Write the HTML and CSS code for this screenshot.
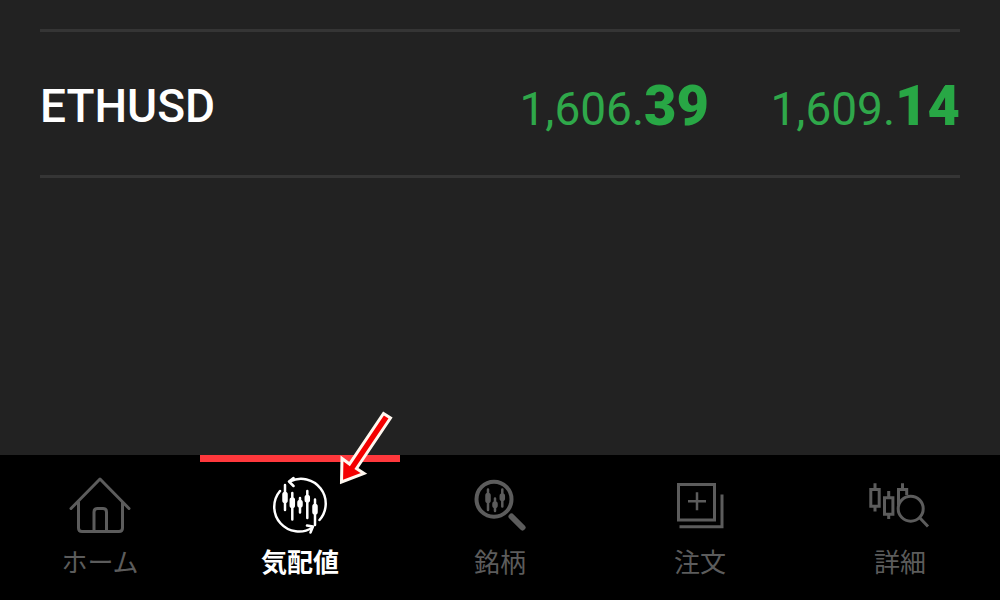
FILE: index.html
```html
<!DOCTYPE html>
<html lang="ja">
<head>
    <meta charset="UTF-8">
    <meta name="viewport" content="width=device-width, initial-scale=1.0">
    <title>気配値</title>
    <link rel="stylesheet" href="styles.css">
</head>
<body>
    <main class="quotes">
        <table class="quote-table">
            <tbody>
                <tr>
                    <th class="symbol" scope="row">ETHUSD</th>
                    <td class="price">1,606.<b>39</b></td>
                    <td class="price ask">1,609.<b>14</b></td>
                </tr>
            </tbody>
        </table>
    </main>

    <nav class="tab-bar">
        <a class="tab" href="#home">
            <svg class="icon" viewBox="0 0 64 64" aria-hidden="true">
                <path d="M3 34.500 32 5l29 29.500M10.500 28v26q0 3.500 3.500 3.500h37q3.500 0 3.500-3.500V28M26 57V38q0-3.500 3.500-3.500h5.500q3.500 0 3.500 3.500v19"/>
            </svg>
            <span>ホーム</span>
        </a>
        <a class="tab active" href="#quotes" aria-current="page">
            <svg class="icon" viewBox="0 0 64 64" aria-hidden="true">
                <path class="thin" d="M22 7.500A24.700 24.700 0 0 1 51.500 46M12 17A24.700 24.700 0 0 0 44.500 53.500M25.500 4 21 7.500l4.500 4.500M39 51.500l6 1-2.500 6"/>
                <path class="wick" d="M17 11v25M24.300 19v26.500M32 24v14.500M39.300 17v27M47 25.500V51"/>
                <path class="body" d="M17 20.500v6M24.300 26v5.500M32 28.500v2.500M39.300 23.500v2.500M47 32.500v5.500"/>
            </svg>
            <span>気配値</span>
            <svg class="pointer" viewBox="0 0 64 80" aria-hidden="true">
                <path d="M49.500 6.500 56.500 11 22.500 61.500l7.500 5L7.500 75 8 51.500l7.500 5.500Z"/>
            </svg>
        </a>
        <a class="tab" href="#symbols">
            <svg class="icon" viewBox="0 0 64 64" aria-hidden="true">
                <circle class="thick" cx="26" cy="25.300" r="17.500"/>
                <path class="handle" d="M43.500 42.500 54.500 53.500"/>
                <path class="wick" d="M20 15.500v20.500M27 24.500v12.500M34.300 15.500v17"/>
                <path class="body" d="M20 21.500v5M27 30v1.500M34.300 22v2.500"/>
            </svg>
            <span>銘柄</span>
        </a>
        <a class="tab" href="#orders">
            <svg class="icon square" viewBox="0 0 64 64" aria-hidden="true">
                <path d="M10.500 10.500h36V46h-36ZM54 20.500v32.200H11.500"/>
                <path class="wick" d="M20 27.200h18M29 18.200v18"/>
            </svg>
            <span>注文</span>
        </a>
        <a class="tab" href="#details">
            <svg class="icon square" viewBox="0 0 64 64" aria-hidden="true">
                <path d="M2.800 15.500h8.400v16.700H2.800ZM7 9.300v6M7 32.500v5M16.500 23.800h8.400v16.400h-8.400ZM20.700 17v6.500M20.700 40.500V45M30.500 31V15.500h8.200V21M34.500 9.300v6M51.500 43.500 60 52.500"/>
                <circle cx="42.700" cy="34.700" r="12.500"/>
            </svg>
            <span>詳細</span>
        </a>
    </nav>
</body>
</html>
```
FILE: styles.css
```css
* {
    margin: 0;
    padding: 0;
    box-sizing: border-box;
}

body {
    min-height: 100vh;
    display: flex;
    flex-direction: column;
    background: #222222;
    color: #ffffff;
    font-family: Roboto, "Noto Sans CJK JP", sans-serif;
}

.quotes {
    flex: 1;
    padding: 29px 40px;
}

.quote-table {
    width: 100%;
    border-collapse: separate;
    border-spacing: 0;
    border-top: 3px solid #353535;
    border-bottom: 3px solid #353535;
}

.quote-table th,
.quote-table td {
    height: 143px;
    line-height: 64px;
    vertical-align: middle;
    white-space: nowrap;
}

.quote-table .symbol {
    padding-top: 4px;
    font-size: 46px;
    font-weight: 500;
    text-align: left;
}

.quote-table .price {
    padding-top: 8px;
    color: #2fa84a;
    font-size: 46px;
    font-weight: 400;
    text-align: right;
}

.price b {
    color: #28a745;
    font-size: 56px;
    font-weight: 900;
}

.ask {
    width: 251px;
}

.tab-bar {
    display: grid;
    grid-template-columns: repeat(5, 1fr);
    height: 145px;
    background: #000000;
}

.tab {
    position: relative;
    display: flex;
    flex-direction: column;
    align-items: center;
    gap: 6px;
    padding-top: 12px;
    border-top: 7px solid transparent;
    color: #5c5c5c;
    font-size: 26px;
    line-height: 38px;
    text-decoration: none;
}

.tab.active {
    border-top-color: #ff383c;
    color: #ffffff;
    font-weight: 700;
}

.icon {
    width: 64px;
    height: 64px;
    fill: none;
    stroke: currentColor;
    stroke-width: 3;
    stroke-linecap: round;
    stroke-linejoin: round;
}

.icon.square {
    stroke-linecap: butt;
    stroke-linejoin: miter;
}

.icon .thin,
.icon .wick {
    stroke-width: 2.5;
}

.icon .thick {
    stroke-width: 4;
}

.icon .body {
    stroke-width: 5.5;
}

.icon .handle {
    stroke-width: 6;
}

/* red arrow over the active tab */
.pointer {
    position: absolute;
    top: -55px;
    right: 2px;
    width: 64px;
    height: 80px;
    fill: #f40000;
    stroke: #fff8f0;
    stroke-width: 3;
}
```
